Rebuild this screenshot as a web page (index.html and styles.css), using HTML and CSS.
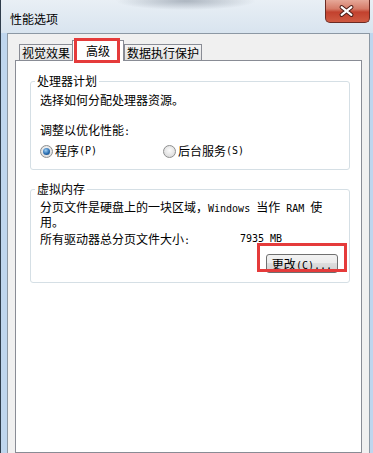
FILE: index.html
```html
<!DOCTYPE html>
<html lang="zh-CN">
<head>
    <meta charset="UTF-8">
    <meta name="viewport" content="width=device-width, initial-scale=1.0">
    <title>性能选项</title>
    <link rel="stylesheet" href="styles.css">
</head>
<body>
    <div class="window">
        <div class="titlebar">
            <span class="title">性能选项</span>
            <div class="close">
                <svg width="45" height="23" viewBox="0 0 45 23">
                    <path d="M17 7 L27 15 M27 7 L17 15" stroke="#4a1c16" stroke-width="4.2" stroke-linecap="round"/>
                    <path d="M17 7 L27 15 M27 7 L17 15" stroke="#ffffff" stroke-width="2.2" stroke-linecap="round"/>
                </svg>
            </div>
        </div>

        <div class="frame">
            <div class="client">
                <div class="tabs">
                    <div class="tab">视觉效果</div>
                    <div class="tab active">高级</div>
                    <div class="tab">数据执行保护</div>
                </div>

                <div class="panel">
                    <!-- 处理器计划 -->
                    <fieldset class="group">
                        <legend>处理器计划</legend>
                        <p class="text">选择如何分配处理器资源。</p>
                        <p class="text spaced">调整以优化性能<span class="latin">:</span></p>
                        <div class="radios">
                            <label class="radio-item first"><span class="radio checked"></span>程序<span class="latin">(P)</span></label>
                            <label class="radio-item"><span class="radio"></span>后台服务<span class="latin">(S)</span></label>
                        </div>
                    </fieldset>

                    <!-- 虚拟内存 -->
                    <fieldset class="group memory">
                        <legend>虚拟内存</legend>
                        <p class="para">分页文件是硬盘上的一块区域，<span class="latin">Windows </span>当作<span class="latin"> RAM </span>使用。</p>
                        <div class="size-row">
                            <span class="size-label">所有驱动器总分页文件大小<span class="latin">:</span></span>
                            <span class="latin">7935 MB</span>
                        </div>
                        <div class="actions">
                            <button class="btn">更改<span class="latin">(C)...</span></button>
                        </div>
                    </fieldset>
                </div>
            </div>
        </div>

        <div class="mark mark-tab"></div>
        <div class="mark mark-btn"></div>
    </div>
</body>
</html>
```

FILE: styles.css
```css
* {
    box-sizing: border-box;
}

body {
    margin: 0;
    font-family: "Noto Sans CJK SC", sans-serif;
    font-size: 12px;
    color: #000;
    background: #fff;
}

p {
    margin: 0;
}

.latin {
    font-family: "DejaVu Sans Mono", monospace;
    font-size: 10px;
}

/* Fenetre */
.window {
    position: relative;
    width: 373px;
    height: 453px;
    overflow: hidden;
    display: flex;
    flex-direction: column;
    background: #bfd6ee;
    border-left: 1px solid #2f3d4c;
}

.titlebar {
    height: 33px;
    flex-shrink: 0;
    display: flex;
    justify-content: space-between;
    padding-left: 9px;
    background:
        radial-gradient(ellipse 70px 9px at 185px 1px, rgba(100, 112, 128, 0.45), transparent),
        linear-gradient(#e9eff5, #d8e4ef);
}

.title {
    margin-top: 11px;
    line-height: 16px;
}

.close {
    width: 45px;
    height: 23px;
    margin-right: 3px;
    border: 1px solid #6b2b23;
    border-top: none;
    border-radius: 0 0 5px 5px;
    background: linear-gradient(#e6a898 0%, #d57b68 40%, #c2412e 55%, #cf5a42 100%);
    display: flex;
}

.close svg {
    margin-left: -1px;
}

.frame {
    flex: 1;
    display: flex;
    padding: 0 3px 0 6px;
}

.client {
    flex: 1;
    display: flex;
    flex-direction: column;
    border: 1px solid #8c98a4;
    border-bottom: none;
    background: #f0f0f0;
    padding: 0 7px;
}

/* Onglets */
.tabs {
    height: 26px;
    display: flex;
    align-items: flex-end;
    padding-left: 4px;
    position: relative;
    z-index: 1;
}

.tab {
    height: 16px;
    line-height: 15px;
    padding: 0 2px;
    border: 1px solid #898c95;
    border-bottom: none;
    background: linear-gradient(#f4f4f4, #e2e2e2);
}

.tab.active {
    height: 21px;
    line-height: 19px;
    margin-bottom: -1px;
    margin-left: -1px;
    padding: 0 13px;
    background: #fff;
}

.panel {
    flex: 1;
    background: #fff;
    border: 1px solid #898c95;
    padding: 13px 11px 0 14px;
}

/* Groupes */
.group {
    margin: 0;
    border: 1px solid #d5dfe5;
    border-radius: 3px;
    padding: 5px 11px 11px 9px;
    min-width: 0;
}

.group legend {
    padding: 0 2px;
    margin-left: -5px;
    line-height: 14px;
}

.text {
    line-height: 14px;
}

.text.spaced {
    margin-top: 16px;
}

.radios {
    margin-top: 5px;
    display: flex;
    line-height: 14px;
}

.radio-item {
    display: flex;
    align-items: center;
}

.radio-item.first {
    width: 123px;
}

.radio {
    width: 13px;
    height: 13px;
    margin-right: 2px;
    border-radius: 50%;
    border: 1px solid #8e8f8f;
    background: radial-gradient(circle at 50% 40%, #fbfbfb, #d3d3d3);
    position: relative;
}

.radio.checked::after {
    content: "";
    position: absolute;
    left: 2px;
    top: 2px;
    width: 7px;
    height: 7px;
    border-radius: 50%;
    background: radial-gradient(circle at 40% 35%, #9fd0f5, #2a6db0 55%, #143f6e);
}

.memory {
    margin-top: 12px;
    padding-top: 4px;
    padding-bottom: 9px;
}

.para {
    width: 288px;
    line-height: 13px;
}

.size-row {
    margin-top: 4px;
    line-height: 14px;
    display: flex;
}

.size-label {
    width: 200px;
}

.actions {
    margin-top: 6px;
    display: flex;
    justify-content: flex-end;
}

.btn {
    height: 19px;
    padding: 0 5px;
    font-family: "Noto Sans CJK SC", sans-serif;
    font-size: 12px;
    line-height: 17px;
    color: #000;
    border: 1px solid #707070;
    border-radius: 3px;
    background: linear-gradient(#f2f2f2 0%, #ebebeb 50%, #dddddd 50%, #cfcfcf 100%);
}

/* Cadres rouges d'annotation */
.mark {
    position: absolute;
    z-index: 2;
    border: 3px solid #e53b3b;
}

.mark-tab {
    left: 73px;
    top: 38px;
    width: 46px;
    height: 25px;
}

.mark-btn {
    left: 256px;
    top: 243px;
    width: 90px;
    height: 29px;
}
```
